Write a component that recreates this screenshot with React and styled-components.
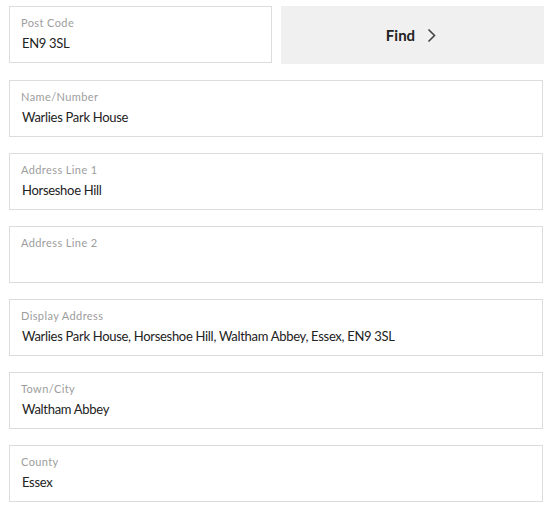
import React from "react";
import styled, { createGlobalStyle } from "styled-components";

const GlobalStyle = createGlobalStyle`
  body {
    margin: 0;
    background: #fff;
    font-family: Lato, "Open Sans", sans-serif;
  }
`;

const Form = styled.div`
  display: flex;
  flex-direction: column;
  gap: 16px;
  padding: 6px 11px 0 9px;
  width: 534px;
`;

const TopRow = styled.div`
  display: grid;
  grid-template-columns: 263px 263px;
  align-items: start;
  gap: 9px;
`;

const Field = styled.label`
  display: flex;
  flex-direction: column;
  box-sizing: border-box;
  height: 57px;
  padding: 9px 11px 0 11px;
  border: 1px solid #dcdcdc;
  background: #fff;
`;

const Label = styled.span`
  font-size: 11px;
  line-height: 14px;
  letter-spacing: 0.4px;
  color: #9d9d9d;
`;

const Value = styled.span`
  margin-top: 5px;
  font-size: 13px;
  line-height: 16px;
  letter-spacing: -0.3px;
  color: #222;
  padding-left: 1px;
`;

const FindButton = styled.button`
  display: flex;
  align-items: center;
  justify-content: center;
  gap: 12px;
  height: 58px;
  border: none;
  background: #f0f0f0;
  font-family: Lato, "Open Sans", sans-serif;
  font-size: 15px;
  font-weight: 700;
  color: #222;
  padding: 0 3px 0 0;
  cursor: pointer;
`;

const Chevron = () => (
  <svg width="9" height="15" viewBox="0 0 9 15" fill="none">
    <path d="M1.5 1.5 L7.5 7.5 L1.5 13.5" stroke="#444" strokeWidth="1.6" />
  </svg>
);

const fields = [
  { label: "Name/Number", value: "Warlies Park House" },
  { label: "Address Line 1", value: "Horseshoe Hill" },
  { label: "Address Line 2", value: "" },
  {
    label: "Display Address",
    value: "Warlies Park House, Horseshoe Hill, Waltham Abbey, Essex, EN9 3SL",
  },
  { label: "Town/City", value: "Waltham Abbey" },
  { label: "County", value: "Essex" },
];

export default function App() {
  return (
    <>
      <GlobalStyle />
      <Form>
        <TopRow>
          <Field>
            <Label>Post Code</Label>
            <Value>EN9 3SL</Value>
          </Field>
          <FindButton>
            Find <Chevron />
          </FindButton>
        </TopRow>
        {fields.map((f) => (
          <Field key={f.label}>
            <Label>{f.label}</Label>
            <Value>{f.value}</Value>
          </Field>
        ))}
      </Form>
    </>
  );
}
